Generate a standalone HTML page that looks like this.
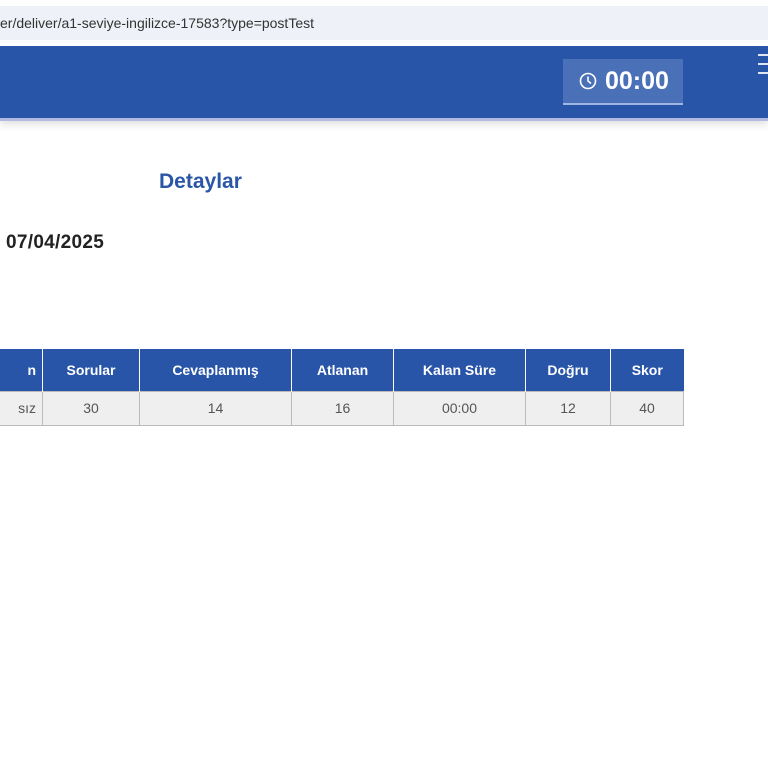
<!DOCTYPE html>
<html><head><meta charset="utf-8"><style>
*{margin:0;padding:0;box-sizing:border-box}
body{width:768px;height:768px;overflow:hidden;background:#fff;font-family:"Liberation Sans",sans-serif;position:relative}
.addr{position:absolute;top:6px;left:0;width:768px;height:34px;background:#eef1f7;font-size:14px;color:#333;line-height:34px;padding-left:0}
.hdr{position:absolute;top:46px;left:0;width:768px;height:72px;background:#2855a8;box-shadow:0 3px 0 #b4b9e4,0 6px 8px #ddd}
.timer{position:absolute;left:563px;top:13px;width:120px;height:46px;background:#4a70b8;border-bottom:2px solid #9fb6e0;color:#fff;font-weight:bold;font-size:25px;line-height:44px}
.timer svg{position:absolute;left:16px;top:13px}
.timer span{position:absolute;left:42px}
.ham{position:absolute;left:758px;top:8px;width:14px}
.ham i{display:block;height:2px;background:#dfe6f3;margin-bottom:7px}
h2{position:absolute;left:159px;top:170px;color:#2a56a5;font-size:21px}
.date{position:absolute;left:6px;top:232px;font-size:19px;font-weight:bold;color:#222;letter-spacing:0.3px}
table{position:absolute;left:-40px;top:349px;border-collapse:collapse;font-size:14px}
th{background:#2855a8;color:#fff;height:42px;border-left:1px solid #fff;font-weight:bold}
td{background:#efefef;height:34px;border:1px solid #bbb;text-align:center;color:#555}
</style></head><body>
<div class="addr">er/deliver/a1-seviye-ingilizce-17583?type=postTest</div>
<div class="hdr">
<div class="timer"><svg width="18" height="18" viewBox="0 0 18 18"><circle cx="9" cy="9" r="7.5" fill="none" stroke="#fff" stroke-width="1.6"/><path d="M9 4.5V9l3 2.5" fill="none" stroke="#fff" stroke-width="1.6"/></svg><span>00:00</span></div>
<div class="ham"><i></i><i></i><i></i></div>
</div>
<h2>Detaylar</h2>
<div class="date">07/04/2025</div>
<table>
<tr><th style="width:82px;text-align:right;padding-right:6px">n</th><th style="width:97px">Sorular</th><th style="width:152px">Cevaplanmış</th><th style="width:102px">Atlanan</th><th style="width:132px">Kalan Süre</th><th style="width:85px">Doğru</th><th style="width:73px">Skor</th></tr>
<tr><td style="text-align:right;padding-right:6px">sız</td><td>30</td><td>14</td><td>16</td><td>00:00</td><td>12</td><td>40</td></tr>
</table>
</body></html>
